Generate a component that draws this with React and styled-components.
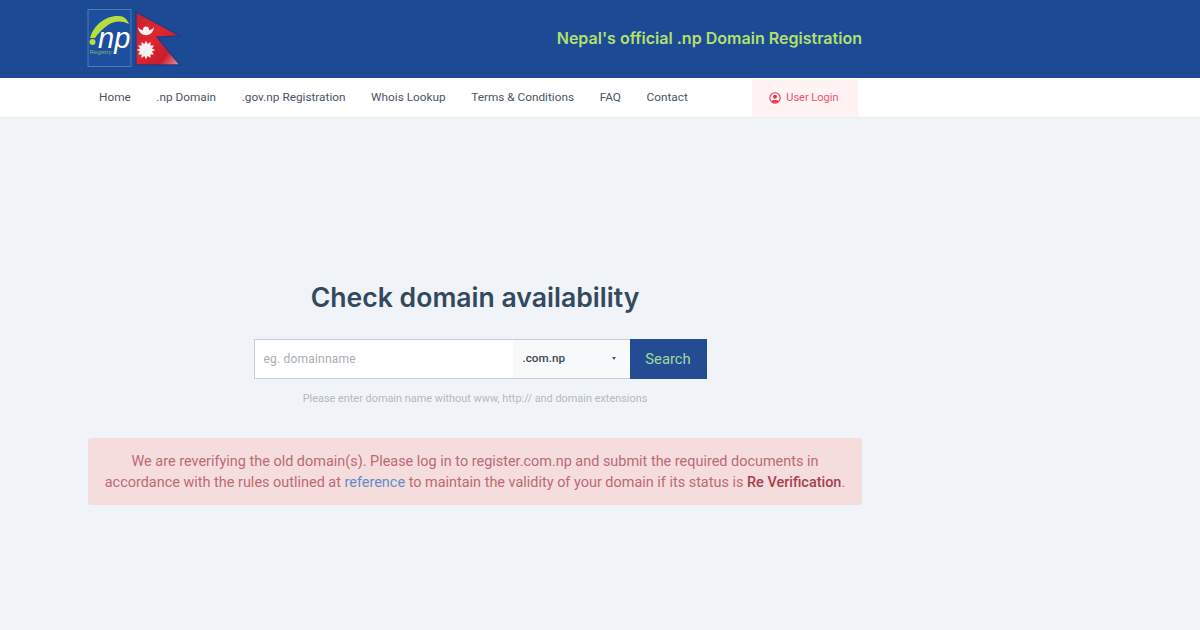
import React from 'react'
import styled, { createGlobalStyle } from 'styled-components'

const GlobalStyle = createGlobalStyle`
  html, body {
    margin: 0;
    padding: 0;
    background: #f0f4f8;
    font-family: Roboto, 'Liberation Sans', sans-serif;
  }
  * {
    box-sizing: border-box;
  }
`

const Page = styled.div`
  width: 1200px;
  height: 630px;
  overflow: hidden;
  background: #f0f4f8;
`

const Header = styled.header`
  height: 78px;
  background: #1c4a94;
  padding: 9px 338px 0 87px;
  display: flex;
  justify-content: space-between;
`

const Logo = styled.svg`
  width: 96px;
  height: 60px;
  display: block;
`

const Tagline = styled.h1`
  margin: 19px 0 0;
  font-family: Inter, sans-serif;
  font-size: 16.05px;
  line-height: 21px;
  font-weight: 600;
  color: #b3e06e;
`

const Nav = styled.nav`
  height: 40px;
  background: #fff;
  border-bottom: 1px solid #e8edf2;
  padding-left: 99px;
  display: flex;
  align-items: center;
`

const NavLink = styled.a`
  margin: 0 25.6px 2px 0;
  font-size: 11.8px;
  color: #4c5565;
  white-space: nowrap;
`

const LoginLink = styled.a`
  width: 106px;
  height: 38px;
  margin-left: 39px;
  padding-right: 3px;
  background: #fff3f4;
  color: #ea5368;
  font-size: 11px;
  display: flex;
  align-items: center;
  justify-content: center;
  gap: 5px;
`

const Main = styled.main`
  width: 774px;
  margin-left: 88px;
  padding-top: 161px;
  display: flex;
  flex-direction: column;
  align-items: center;
`

const Title = styled.h2`
  margin: 0 0 24px;
  font-family: Inter, sans-serif;
  font-size: 26.6px;
  line-height: 36px;
  font-weight: 600;
  color: #34495e;
`

const SearchForm = styled.form`
  width: 453px;
  height: 40px;
  margin-left: 10px;
  display: flex;
`

const DomainInput = styled.div`
  flex: 1;
  background: #fff;
  border: 1px solid #c5cdd6;
  border-right: 0;
  padding-left: 9px;
  font-size: 12px;
  line-height: 39px;
  letter-spacing: 0.2px;
  color: #a9aeb4;
`

const TldSelect = styled.div`
  width: 117px;
  background: #f7f9fb;
  border-top: 1px solid #c5cdd6;
  border-bottom: 1px solid #c5cdd6;
  padding: 0 14px 2px 10px;
  display: flex;
  align-items: center;
  justify-content: space-between;
  font-size: 11.7px;
  font-weight: 500;
  color: #3d4652;
`

const Caret = styled.span`
  width: 0;
  height: 0;
  border-left: 2px solid transparent;
  border-right: 2px solid transparent;
  border-top: 3px solid #3f5c8c;
`

const SearchButton = styled.button`
  width: 77px;
  border: 0;
  padding: 0;
  background: #234c92;
  color: #9fdb9a;
  font-family: Roboto, sans-serif;
  font-size: 14.8px;
`

const Hint = styled.p`
  margin: 13px 0 0;
  font-size: 10.9px;
  line-height: 14px;
  color: #b4b9bf;
`

const Alert = styled.div`
  width: 100%;
  height: 67px;
  margin-top: 32px;
  padding: 13px 10px;
  background: #f5dcdd;
  border-radius: 3px;
  text-align: center;
  font-size: 14.45px;
  line-height: 21px;
  color: #bd6a72;
`

const RefLink = styled.a`
  color: #5f8cc4;
`

const Strong = styled.strong`
  font-weight: 500;
  color: #a8414c;
`

const navItems = ['Home', '.np Domain', '.gov.np Registration', 'Whois Lookup', 'Terms & Conditions', 'FAQ', 'Contact']

// 12 pointed sun of the flag
const sunPoints = Array.from({ length: 24 }, (_, i) => {
  const r = i % 2 ? 6.2 : 9.2
  const a = (i * Math.PI) / 12
  return `${(59 + r * Math.sin(a)).toFixed(2)},${(41 - r * Math.cos(a)).toFixed(2)}`
}).join(' ')

const LogoMark = () => (
  <Logo viewBox="0 0 96 60">
    <defs>
      <linearGradient id="flagRed" x1="0" y1="0" x2="1" y2="1">
        <stop offset="0" stopColor="#c9202c" />
        <stop offset="0.45" stopColor="#e0262f" />
        <stop offset="0.75" stopColor="#c81e2b" />
        <stop offset="1" stopColor="#e8a0a8" />
      </linearGradient>
    </defs>
    <rect x="1" y="0.5" width="43" height="57" fill="#1d4f9f" stroke="#5f83bd" strokeWidth="0.8" />
    <path d="M3 29 C7 15 20 6 32 7 C37 7 40 10 42 15 C34 11 27 12 21 16 C15 20 11 25 8 29 Z" fill="#b9dc40" />
    <circle cx="5.5" cy="33" r="3" fill="#b9dc40" />
    <text x="11" y="39" fontFamily="'Liberation Sans', sans-serif" fontStyle="italic" fontSize="29" fill="#fff">np</text>
    <text x="2.5" y="45" fontFamily="'Liberation Sans', sans-serif" fontSize="6" fill="#8fae6c">Registry</text>
    <path d="M49 3 L93 27 L70 28 L93 56 L49 56 Z" fill="url(#flagRed)" stroke="#1f3d8a" strokeWidth="1.3" />
    <path d="M51 18 C52 29 66 29 67 18 C64 23 54 23 51 18 Z" fill="#f6f1f1" />
    <circle cx="59" cy="20.5" r="3" fill="#f6f1f1" />
    <polygon points={sunPoints} fill="#f6f1f1" />
  </Logo>
)

const UserIcon = () => (
  <svg width="12" height="12" viewBox="0 0 12 12">
    <circle cx="6" cy="6" r="5.2" fill="none" stroke="#e5354f" strokeWidth="1.1" />
    <circle cx="6" cy="4.7" r="2" fill="#e5354f" />
    <path d="M2.4 9.4 C3.2 7.6 8.8 7.6 9.6 9.4 C8 11.2 4 11.2 2.4 9.4 Z" fill="#e5354f" />
  </svg>
)

const App = () => (
  <Page>
    <GlobalStyle />
    <Header>
      <LogoMark />
      <Tagline>Nepal's official .np Domain Registration</Tagline>
    </Header>
    <Nav>
      {navItems.map((item) => (
        <NavLink key={item}>{item}</NavLink>
      ))}
      <LoginLink>
        <UserIcon />
        User Login
      </LoginLink>
    </Nav>
    <Main>
      <Title>Check domain availability</Title>
      <SearchForm>
        <DomainInput>eg. domainname</DomainInput>
        <TldSelect>
          .com.np
          <Caret />
        </TldSelect>
        <SearchButton type="button">Search</SearchButton>
      </SearchForm>
      <Hint>Please enter domain name without www, http:// and domain extensions</Hint>
      <Alert>
        We are reverifying the old domain(s). Please log in to register.com.np and submit the required documents in
        accordance with the rules outlined at <RefLink>reference</RefLink> to maintain the validity of your domain if
        its status is <Strong>Re Verification</Strong>.
      </Alert>
    </Main>
  </Page>
)

export default App
